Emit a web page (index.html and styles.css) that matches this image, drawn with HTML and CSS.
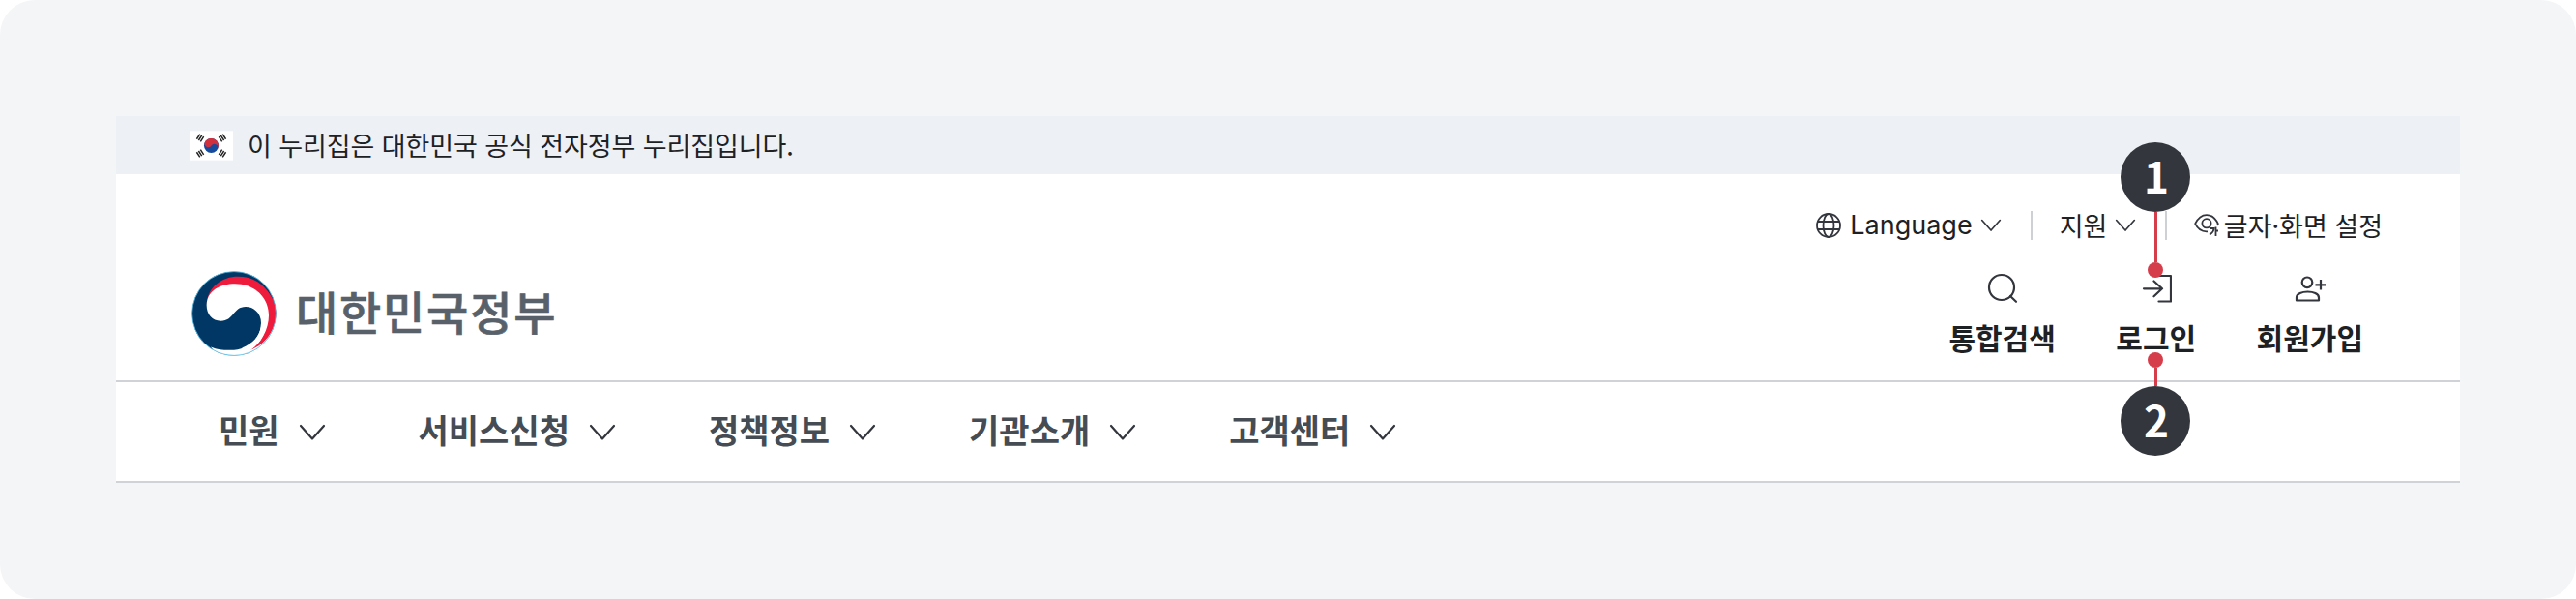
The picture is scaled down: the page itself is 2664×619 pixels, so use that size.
FILE: index.html
```html
<!DOCTYPE html>
<html lang="ko">
<head>
<meta charset="utf-8">
<title>대한민국정부</title>
<link rel="stylesheet" href="styles.css">
</head>
<body>
<svg class="defs" width="0" height="0">
  <symbol id="chev" viewBox="0 0 28 18"><path d="M2 2 L14 15.500 L26 2" fill="none" stroke="#33363d" stroke-width="2.200" stroke-linecap="round" stroke-linejoin="round"/></symbol>
</svg>
<main class="canvas">
  <header class="panel">
    <div class="official">
      <svg class="flag" viewBox="0 0 46 31">
        <rect width="46" height="31" fill="#fff"/>
        <circle cx="23" cy="15.500" r="7.700" fill="#154a9c"/>
        <path d="M16.600 11.200 A7.700 7.700 0 0 1 29.400 19.800 A3.850 3.850 0 0 0 23 15.500 A3.850 3.850 0 0 1 16.600 11.200Z" fill="#d2303c"/>
        <g stroke="#222" stroke-width="1.500">
          <path id="bars" d="M7.600 8.600l3.400-5.200M9.600 9.900l3.400-5.200M11.600 11.200l3.400-5.200"/>
          <use href="#bars" transform="rotate(180 23 15.500)"/>
          <use href="#bars" transform="matrix(-1 0 0 1 46 0)"/>
          <use href="#bars" transform="matrix(1 0 0 -1 0 31)"/>
        </g>
      </svg>
      <span class="official-text">이 누리집은 대한민국 공식 전자정부 누리집입니다.</span>
    </div>
    <div class="head">
      <div class="brand">
        <svg class="emblem" viewBox="0 0 88 88">
          <circle cx="44" cy="44" r="43.500" fill="#003764"/>
          <path d="M87.500 44 A43.500 43.500 0 0 1 22 81.600 C22 80 20 79 20 78.500 C28 82 36 82 44 81.700 C60 80.500 72 69 72 54Z" fill="#fff"/>
          <path d="M15.700 34 C17 16 32 5.700 48 5.700 C62 5.700 72 12 78 20 C84 27 87.500 35 87.500 44 C87.500 60 77 76 61 81.700 C72 75 79 60 79 46 C79 28 66 14 45 14 C30 14 18 20 15.700 34Z" fill="#ef1b3c"/>
          <path d="M15.700 34 C17 20 30 13.300 45 13.300 C66 13.300 80 28 80 46 C80 60 72 75 61 81.700 L52 79.500 C64 75 72 66 72 54 C72 43 64 37 56 37 C43 37 44 51.700 30.300 51.700 C21 51.700 15 44 15.700 34Z" fill="#fff"/>
          <circle cx="44" cy="44" r="43.400" fill="none" stroke="#5cc4ee" stroke-width=".8"/>
        </svg>
        <span class="brand-name">대한민국정부</span>
      </div>
      <div class="tools">
        <div class="utility">
          <span class="util lang"><svg class="globe" viewBox="0 0 26 26" fill="none" stroke="#33363d" stroke-width="1.800"><circle cx="13" cy="13" r="12"/><ellipse cx="13" cy="13" rx="5.500" ry="12"/><path d="M2 9h22M2 17h22"/></svg><span class="lang-text">Language</span><svg class="chev-s"><use href="#chev"/></svg></span>
          <i class="sep"></i>
          <span class="util support"><span>지원</span><svg class="chev-s"><use href="#chev"/></svg></span>
          <i class="sep"></i>
          <span class="util view"><svg class="eye" viewBox="0 0 26 24" fill="none" stroke="#33363d" stroke-width="1.800"><path d="M14 18.300C7 18.800 3 14 1.200 10.200C7-2 19-2 24.800 10.200L24 12"/><circle cx="13" cy="9.800" r="4.600"/><path d="M16 15h4.500q0 4-4.500 6.500M22.500 13.500v9.500M22.500 17.500h2.500"/></svg><span>글자·화면 설정</span></span>
        </div>
        <div class="actions">
          <div class="action"><svg viewBox="0 0 32 32" fill="none" stroke="#33363d" stroke-width="2.200"><circle cx="15" cy="15" r="13"/><path d="M24 24l6 5.800" stroke-linecap="round"/></svg><span>통합검색</span></div>
          <div class="action"><svg viewBox="0 0 32 32" fill="none" stroke="#33363d" stroke-width="2.200" stroke-linecap="round" stroke-linejoin="round"><path d="M18.500 3h12.500v26.500h-12.500M3 16.300h19M13.500 8.500l8.500 7.800-8.500 8"/></svg><span>로그인</span></div>
          <div class="action"><svg viewBox="0 0 32 32" fill="none" stroke="#33363d" stroke-width="2.200" stroke-linejoin="round"><circle cx="13" cy="9.800" r="5.300"/><path d="M2 28.500v-3C2 17.500 25 17.500 25 25.500V28.500ZM27 7v10.500M21.500 12.300h10.500"/></svg><span>회원가입</span></div>
        </div>
      </div>
    </div>
    <nav class="nav">
      <span class="item"><span class="label">민원</span><svg class="chev"><use href="#chev"/></svg></span>
      <span class="item"><span class="label">서비스신청</span><svg class="chev"><use href="#chev"/></svg></span>
      <span class="item"><span class="label">정책정보</span><svg class="chev"><use href="#chev"/></svg></span>
      <span class="item"><span class="label">기관소개</span><svg class="chev"><use href="#chev"/></svg></span>
      <span class="item"><span class="label">고객센터</span><svg class="chev"><use href="#chev"/></svg></span>
    </nav>
  </header>
  <div class="pin pin-one"><b>1</b><i class="stem"></i><i class="dot"></i></div>
  <div class="pin pin-two"><i class="dot"></i><i class="stem"></i><b>2</b></div>
</main>
</body>
</html>
```
FILE: styles.css
```css
* { box-sizing: border-box; }
body { margin: 0; background: #fff; font-family: "Noto Sans CJK KR", "Noto Sans", sans-serif; color: #1e2124; white-space: nowrap; }
.defs { position: absolute; }
svg { display: block; flex: none; }
.canvas { position: relative; width: 2664px; height: 619px; padding: 120px; background: #f4f5f7; border-radius: 36px; }
.panel { width: 2424px; background: #fff; }
.official { display: flex; align-items: center; gap: 15px; height: 60px; padding-left: 76px; background: #edf0f5; font-size: 27px; }
.flag { width: 45px; height: 31px; }
.official-text { letter-spacing: -0.080px; line-height: 40px; padding-bottom: 1px; }
.head { display: flex; justify-content: space-between; height: 215px; border-bottom: 2px solid #cfd3d8; }
.brand { display: flex; align-items: center; gap: 20px; height: 88px; margin: 100px 0 0 78px; }
.emblem { width: 88px; height: 88px; }
.brand-name { font-size: 47px; font-weight: 500; color: #58616a; line-height: 60px; letter-spacing: 1.800px; padding-bottom: 6px; -webkit-text-stroke: 0.700px #58616a; }
.tools { width: 700px; padding: 33px 80px 0 0; }
.utility { display: flex; justify-content: flex-end; align-items: center; height: 40px; font-size: 27px; line-height: 40px; }
.util { display: flex; align-items: center; }
.lang { margin-right: 2px; }
.support { margin-right: 1.500px; }
.globe { width: 26px; height: 26px; margin-right: 9px; }
.lang-text { font-family: Inter, sans-serif; }
.chev-s { width: 22px; height: 14px; margin-left: 8px; }
.sep { width: 2px; height: 30px; margin: 0 28px; background: #cdd1d5; }
.eye { width: 26px; height: 24px; margin-right: 5px; }
.actions { display: flex; justify-content: flex-end; gap: 62.500px; margin: 29px 20px 0 0; }
.action { display: flex; flex-direction: column; align-items: center; gap: 14px; font-size: 30px; font-weight: 700; line-height: 40px; }
.action svg { width: 32px; height: 32px; }
.nav { display: flex; gap: 96px; align-items: center; height: 104px; padding-left: 106px; border-bottom: 2px solid #cfd3d8; font-size: 34px; font-weight: 700; color: #464c53; }
.item { display: flex; align-items: center; gap: 20px; }
.label { padding-bottom: 5px; }
.chev { width: 28px; height: 18px; margin-top: 2px; }
.pin { position: absolute; left: 2193px; width: 72px; display: flex; flex-direction: column; align-items: center; }
.pin-one { top: 147px; }
.pin-two { top: 364px; }
.pin b { display: flex; align-items: center; justify-content: center; width: 72px; height: 72px; padding: 0 0 4px 2px; border-radius: 50%; background: #33363d; color: #fff; font-size: 44px; line-height: 68px; }
.stem { width: 3px; height: 52px; background: #d63d4a; }
.pin-two .stem { height: 19px; }
.dot { width: 16px; height: 16px; border-radius: 50%; background: #d63d4a; }
```
